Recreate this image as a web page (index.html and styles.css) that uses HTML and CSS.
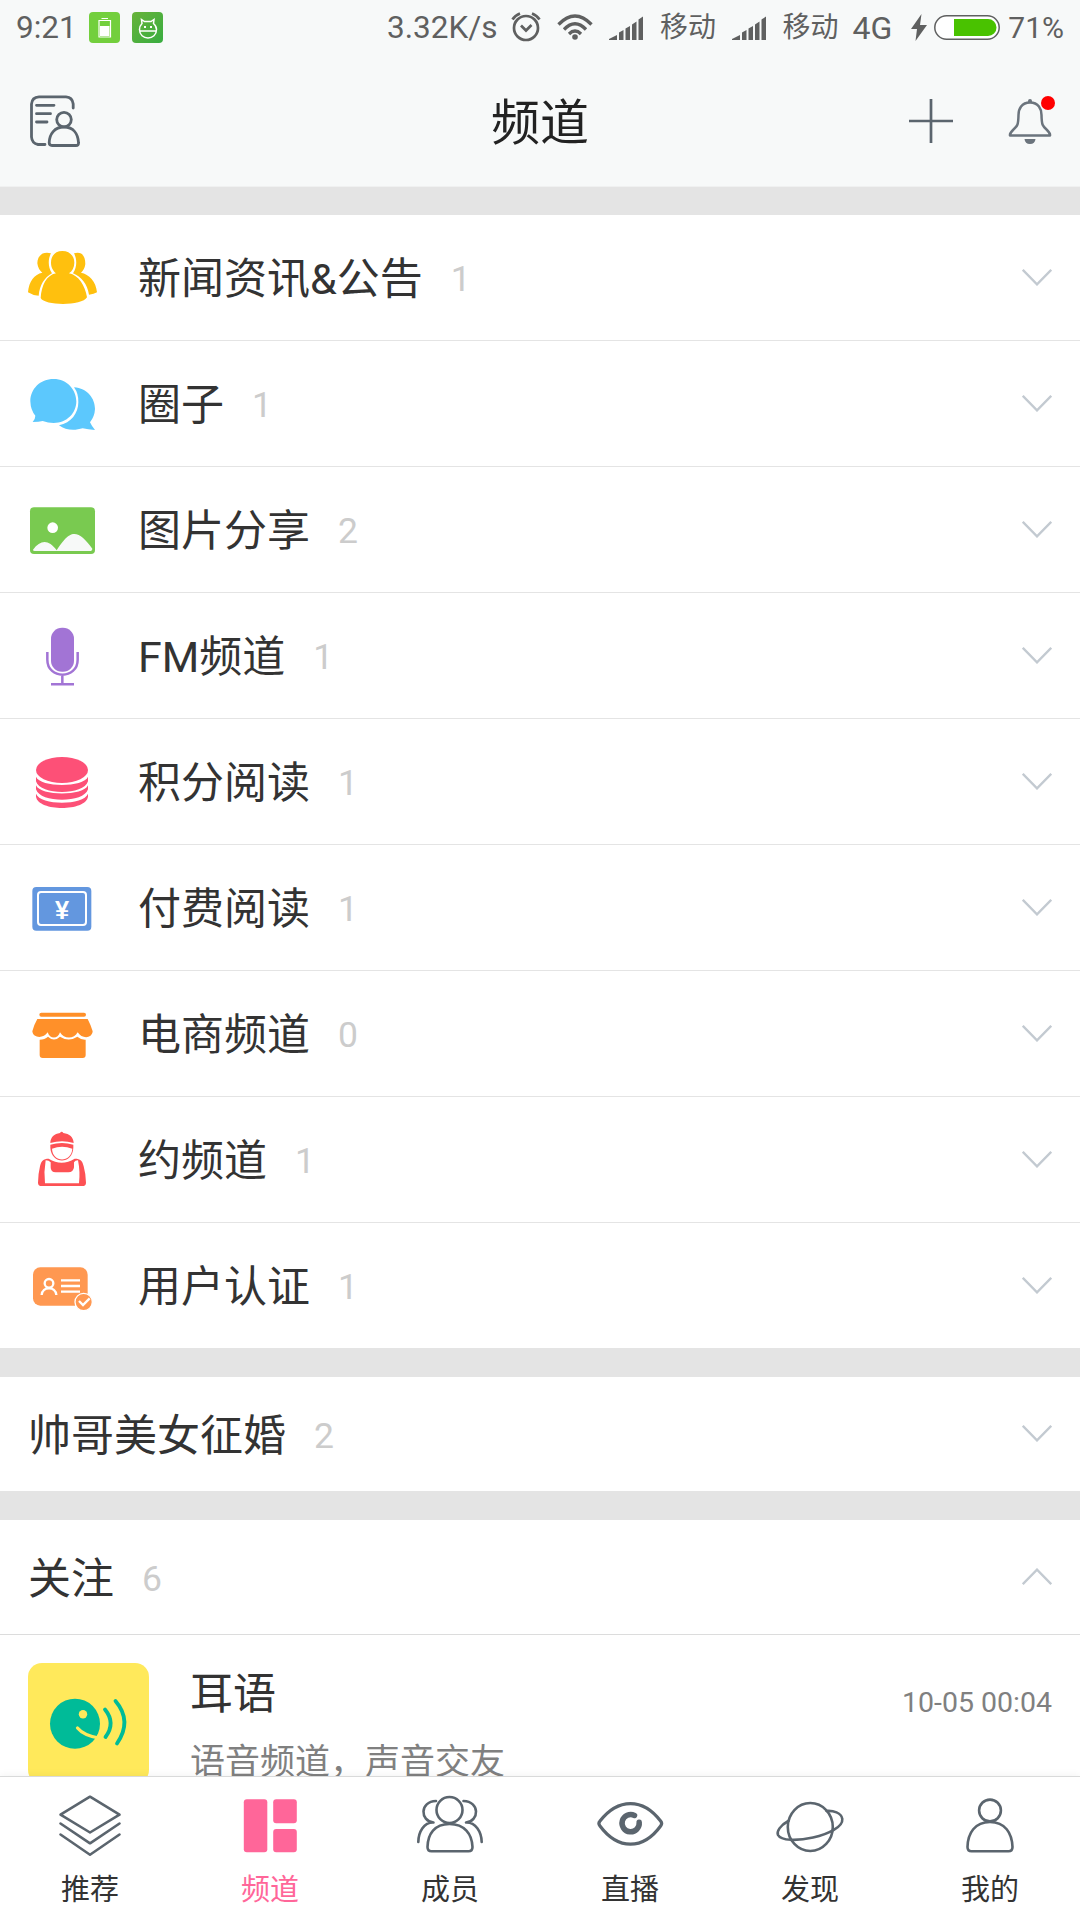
FILE: index.html
```html
<!DOCTYPE html>
<html lang="zh-CN">
<head>
<meta charset="utf-8">
<title>频道</title>
<link rel="stylesheet" href="styles.css">
</head>
<body>
<svg class="defs" aria-hidden="true">
  <symbol id="chevron" viewBox="0 0 30 17"><path d="M.8 .8 15 15.4 29.2 .8" fill="none" stroke="#c3cad1" stroke-width="2.300"/></symbol>
  <symbol id="signal" viewBox="0 0 34 24"><path d="M0 24V23L8 19V24ZM10 24V16.500L14.500 14V24ZM16.500 24V12.500L21 10V24ZM23 24V8.500L27.500 5.500V24ZM29.500 24V3.500L34 .500V24Z" fill="#5f6060"/></symbol>
</svg>
<div class="screen">
  <div class="status">
    <span class="clock">9:21</span>
    <svg class="app-badge" viewBox="0 0 31 31"><rect width="31" height="31" rx="4" fill="#73cf3d"/><path d="M12.500 6.500H19M10 8.500H21.500V25H10Z" fill="none" stroke="#fff" stroke-width="1.200"/><path d="M11 14H20.500V24H11Z" fill="#fff"/></svg>
    <svg class="app-badge second" viewBox="0 0 31 31"><defs><linearGradient id="g" x1="0" y1="0" x2="1" y2="1"><stop offset="0" stop-color="#68b33a"/><stop offset="1" stop-color="#38ad41"/></linearGradient></defs><rect width="31" height="31" rx="4" fill="url(#g)"/><path d="M10 11.500 9.500 7.500 12.500 9.500H19L22 7.500 21.500 11.500Q24.500 14 24.500 17.500C24.500 23 20.500 26 16 26S7.500 23 7.500 17.500Q7.500 14 10 11.500ZM7.500 19H24.500" fill="none" stroke="#fff" stroke-width="1.500"/><path d="M12 14h2v2h-2zM18 14h2v2h-2z" fill="#fff"/></svg>
    <span class="speed">3.32K/s</span>
    <svg class="alarm" viewBox="0 0 30 30"><g fill="none" stroke="#5f6060" stroke-width="2.700"><circle cx="15" cy="16" r="12"/><path d="M1.500 7.500Q4 3.500 9 1.500M28.500 7.500Q26 3.500 21 1.500M10 13.500 15 18.500 20.500 13" /></g></svg>
    <svg class="wifi" viewBox="0 0 36 26"><g fill="none" stroke="#5f6060" stroke-width="3.300"><path d="M1.500 10.500Q18-6.500 34.500 10.500M7 15.500Q18 4 29 15.500M12 20Q18 14 24 20"/></g><circle cx="18" cy="23" r="2.800" fill="#5f6060"/></svg>
    <svg class="signal"><use href="#signal"/></svg>
    <span class="carrier">移动</span>
    <svg class="signal"><use href="#signal"/></svg>
    <span class="carrier">移动</span>
    <span class="net">4G</span>
    <svg class="bolt" viewBox="0 0 16 27"><path d="M10.500 0 0 15H6L4.500 27 16 11H9Z" fill="#5f6060"/></svg>
    <svg class="battery" viewBox="0 0 66 25"><rect x=".8" y=".8" width="64.400" height="23.400" rx="11.700" fill="#fff" stroke="#5f6060" stroke-width="1.500"/><path d="M20 4H54A8.500 8.500 0 0 1 54 21H20Z" fill="#49c200"/></svg>
    <span class="percent">71%</span>
  </div>

  <header class="topbar">
    <svg class="contacts" viewBox="0 0 50 52"><g fill="none" stroke="#5b656e" stroke-width="2.800" stroke-linecap="round"><path d="M43.200 13V9Q42.500 2.200 36 1.800H9Q2 2.200 1.500 9V42Q2 48.500 8 49.500H15M6.500 10.300H24M6.500 18.700H20.500M6.500 27H17"/><circle cx="34" cy="24.600" r="7.300"/><path d="M34 32C24.500 32 19.500 39 19.200 47.500Q19.200 50.500 22 50.500H46Q48.800 50.500 48.500 47.500C48 39 43.500 32 34 32Z"/></g></svg>
    <h1 class="title">频道</h1>
    <svg class="plus" viewBox="0 0 44 44"><path d="M22 0V44M0 22H44" stroke="#5b656e" stroke-width="2.700"/></svg>
    <div class="bell-wrap">
      <svg class="bell" viewBox="0 0 44 46"><g fill="none" stroke="#6b747d" stroke-width="2.500" stroke-linejoin="round"><path d="M22 4.500C13.500 4.500 10.500 11 10.500 17C10.300 27 9.500 28 5 32Q1.500 35.500 2 37.500H42Q42.500 35.500 39 32C34.500 28 33.700 27 33.500 17C33.500 11 30.500 4.500 22 4.500Z"/></g><path d="M20 5V3Q20 1 22 1T24 3V5ZM16.500 41H27.500Q27 46 22 46T16.500 41Z" fill="#6b747d"/></svg>
      <i class="dot"></i>
    </div>
  </header>

  <main class="content">
    <section class="group">
      <div class="row"><svg class="icon" viewBox="72 75 228 225"><g fill="#ffc00e"><path d="M153 115C125 108 112 125 112 145Q114 163 127 173C103 178 87 198 84 232Q97 241 116 242C119 210 133 188 156 175C143 157 144 131 153 115ZM222 115C247 108 256 125 256 147Q254 163 243 173C267 178 288 198 291 232Q282 237 267 239C262 207 244 185 219 175C232 157 231 131 222 115Z"/><path d="M187 108C165 108 153 123 153 143C153 158 160 168 168 175C139 181 125 211 122 249C134 273 247 273 261 247C255 211 236 181 207 175C217 168 223 157 223 143C223 123 209 108 187 108Z"/></g></svg><span class="name">新闻资讯&amp;公告</span><span class="count">1</span><svg class="chev"><use href="#chevron"/></svg></div>
      <div class="row"><svg class="icon" viewBox="72 453 228 225"><g fill="#5cc8fd"><path d="M161 492C120 492 91 522 91 559Q92 586 106 602Q106 612 98 621Q117 621 128 618Q144 624 161 624C201 624 229 594 229 559S201 492 161 492Z"/><path d="M222 517C262 520 285 550 285 582Q284 604 270 622Q275 633 285 645Q264 644 248 640C225 647 197 647 177 631C214 624 235 594 235 562Q236 536 222 517Z"/></g></svg><span class="name">圈子</span><span class="count">1</span><svg class="chev"><use href="#chevron"/></svg></div>
      <div class="row"><svg class="icon" viewBox="72 831 228 225"><rect x="90" y="877" width="195" height="140" rx="12" fill="#79ca50"/><circle cx="158" cy="938" r="16" fill="#fff"/><path d="M99 1004C122 973 146 973 170 1006C198 963 211 957 223 957C240 957 258 975 277 1001Q277 1008 269 1008H104Q99 1008 99 1004Z" fill="#f7f9f8"/></svg><span class="name">图片分享</span><span class="count">2</span><svg class="chev"><use href="#chevron"/></svg></div>
      <div class="row"><svg class="icon" viewBox="72 69 228 225"><rect x="153" y="98" width="69" height="132" rx="33" fill="#a274d5"/><path d="M142 171V194C142 254 233 254 233 194V171M187 240V267M153 268H222" fill="none" stroke="#a274d5" stroke-width="7.500"/></svg><span class="name">FM频道</span><span class="count">1</span><svg class="chev"><use href="#chevron"/></svg></div>
      <div class="row"><svg class="icon" viewBox="72 447 228 225"><g fill="#fd5077"><ellipse cx="186" cy="525" rx="78" ry="39"/><path d="M108 545C121 578 251 578 264 545V559C252 602 120 602 108 559Z"/><path d="M108 571C121 604 251 604 264 571V583C252 625 120 625 108 583Z"/><path d="M108 596C121 632 251 632 264 596V605C257 650 115 650 108 605Z"/></g></svg><span class="name">积分阅读</span><span class="count">1</span><svg class="chev"><use href="#chevron"/></svg></div>
      <div class="row"><svg class="icon" viewBox="72 825 228 225"><rect x="97" y="876" width="177" height="131" rx="12" fill="#6397df"/><rect x="114" y="891" width="144" height="99" rx="9" fill="none" stroke="#fff" stroke-width="6"/><text class="yen" x="186" y="971">¥</text></svg><span class="name">付费阅读</span><span class="count">1</span><svg class="chev"><use href="#chevron"/></svg></div>
      <div class="row"><svg class="icon" viewBox="72 78 228 225"><g fill="#ff9029"><rect x="118" y="128" width="140" height="12" rx="6"/><path d="M112 147H263Q272 164 278 184C276 207 245 207 233 187C223 208 191 208 180 187C174 208 149 208 143 187C131 207 99 205 97 184Q102 164 112 147Z"/><path d="M119 209Q134 209 144 200Q162 217 180 200Q206 217 232 200Q244 210 257 209V255Q257 264 248 264H128Q119 264 119 255Z"/></g></svg><span class="name">电商频道</span><span class="count">0</span><svg class="chev"><use href="#chevron"/></svg></div>
      <div class="row"><svg class="icon" viewBox="72 456 228 225"><g fill="#fd5154"><path d="M151 519C151 502 163 491 180 489Q185 482 190 489C208 491 221 502 221 519Q186 509 151 519Z"/><path d="M151 524Q186 514 220 524V533C218 584 154 584 151 533ZM156 536C158 579 214 579 217 536Q186 525 156 536Z" fill-rule="evenodd"/><path d="M146 566Q185 590 224 566C242 566 247 572 251 589Q257 610 258 638Q258 648 247 648H125Q114 648 114 638Q114 614 120 589C124 572 130 566 146 566ZM137 571Q131 605 135 640H237Q241 605 234 571Q225 571 222 577V592Q220 607 205 607H167Q152 607 152 592V577Q147 571 137 571Z" fill-rule="evenodd"/></g></svg><span class="name">约频道</span><span class="count">1</span><svg class="chev"><use href="#chevron"/></svg></div>
      <div class="row"><svg class="icon" viewBox="72 834 228 225"><rect x="99" y="892" width="164" height="115" rx="22" fill="#ff9851"/><g fill="none" stroke="#fff" stroke-width="7"><circle cx="147" cy="940" r="13"/><path d="M125 975C127 948 167 948 169 975M183 931H240M183 948H240M183 965H240"/></g><circle cx="251" cy="996" r="26" fill="#ff9851" stroke="#fff" stroke-width="4"/><path d="M237 993 249 1005 269 985" fill="none" stroke="#fff" stroke-width="7"/></svg><span class="name">用户认证</span><span class="count">1</span><svg class="chev"><use href="#chevron"/></svg></div>
    </section>

    <section class="group">
      <div class="row compact"><span class="name">帅哥美女征婚</span><span class="count">2</span><svg class="chev"><use href="#chevron"/></svg></div>
    </section>

    <section class="group">
      <div class="row compact"><span class="name">关注</span><span class="count">6</span><svg class="chev up"><use href="#chevron"/></svg></div>
      <article class="feed">
        <svg class="avatar" viewBox="0 0 121 121"><rect width="121" height="121" rx="14" fill="#ffe95b"/><circle cx="47" cy="60.700" r="25" fill="#00bb98"/><circle cx="55" cy="51.300" r="4.200" fill="#ffe95b"/><path d="M49.500 65Q56 73 73 75.500" fill="none" stroke="#ffe95b" stroke-width="3.200" stroke-linecap="round"/><path d="M77 46.500Q88 60 77.500 74M87.500 38Q104.500 58 89 80.500" fill="none" stroke="#00bb98" stroke-width="3.800" stroke-linecap="round"/></svg>
        <div class="feed-text">
          <div class="feed-title">耳语</div>
          <div class="feed-sub">语音频道，声音交友</div>
        </div>
        <time class="feed-time">10-05 00:04</time>
      </article>
    </section>
  </main>

  <nav class="tabs">
    <a class="tab"><svg viewBox="0 0 72 66"><path d="M36 2.700 65.500 20.700 36 38.500 6.500 20.700ZM6.500 29.500 36 49.300 65.500 29.500M6.500 40.500 36 60.800 65.500 40.500" /></svg><span>推荐</span></a>
    <a class="tab active"><svg viewBox="0 0 72 66"><rect x="9.800" y="5.300" width="23.500" height="53" rx="3"/><rect x="39.200" y="5.300" width="23.600" height="24" rx="3"/><rect x="39.200" y="35" width="23.600" height="23.300" rx="3"/></svg><span>频道</span></a>
    <a class="tab"><svg viewBox="0 0 72 66"><circle cx="35.500" cy="16" r="13"/><path d="M35.500 30C20.500 30 13.800 40 13.500 53Q13.500 57.300 17.500 57.300H54.500Q58.500 57.300 58.500 53C58 40 50.500 30 35.500 30ZM22 7C5.500 7.500 6 27 19.500 28.500C10 28 4.500 38 4.300 48M49.500 7C66 7.500 65.500 27 52 28.500C61.500 28 67.500 38 67.700 48"/></svg><span>成员</span></a>
    <a class="tab"><svg viewBox="0 0 72 66"><path class="bold" d="M5.800 27.300C24 3.700 49 3.700 66.800 27.300Q68.500 29.500 66.800 31.700C49 56.300 24 56.300 5.800 31.700Q4 29.500 5.800 27.300Z"/><path class="iris" d="M40.500 21.500A8.600 8.600 0 1 0 45.200 28.300"/></svg><span>直播</span></a>
    <a class="tab"><svg viewBox="0 0 72 66"><ellipse cx="36.300" cy="33" rx="22.500" ry="24"/><path d="M14.300 27C6 31.500 2.500 37.500 4 41C10 53 70 41 68.300 25C67.500 18.500 59 16.500 52.500 17"/></svg><span>发现</span></a>
    <a class="tab"><svg viewBox="0 0 72 66"><circle cx="36" cy="16.500" r="10.900"/><path d="M36 28C21 28 13.800 39 13.500 53Q13.500 57.300 17.500 57.300H54.500Q58.500 57.300 58.500 53C58 39 51 28 36 28Z"/></svg><span>我的</span></a>
  </nav>
</div>
</body>
</html>
```
FILE: styles.css
```css
* { box-sizing: border-box; }
body {
  margin: 0;
  background: #fff;
  font-family: Roboto, "Noto Sans CJK SC", sans-serif;
  color: #333;
}
svg { display: block; flex: none; }
.defs { width: 0; height: 0; position: absolute; }
.screen {
  width: 1080px;
  height: 1920px;
  display: flex;
  flex-direction: column;
  overflow: hidden;
}

/* status bar */
.status {
  height: 56px;
  flex: none;
  display: flex;
  align-items: center;
  padding: 0 16px 1px;
  background: #f7f9f9;
  color: #5f6060;
  font-size: 31.5px;
  line-height: 40px;
  white-space: nowrap;
}
.clock { width: 73px; }
.app-badge { width: 31px; height: 31px; }
.app-badge.second { margin-left: 12px; }
.speed { margin-left: auto; }
.alarm { width: 30px; height: 30px; margin-left: 14px; margin-top: -2px; }
.wifi { width: 36px; height: 26px; margin-left: 16px; margin-top: -1px; }
.signal { width: 34px; height: 24px; margin-left: 16px; }
.carrier { font-size: 28px; margin-left: 16.5px; padding-top: 1px; }
.net { font-size: 32px; margin-left: 14px; }
.bolt { width: 16px; height: 27px; margin-left: 19px; }
.battery { width: 66px; height: 25px; margin-left: 7px; }
.percent { font-size: 30px; margin-left: 8px; }

/* title bar */
.topbar {
  height: 131px;
  flex: none;
  display: flex;
  align-items: center;
  padding: 0 28px 0 30px;
  background: #f7f9f9;
  border-bottom: 1px solid #f0f1f1;
}
.contacts { width: 50px; height: 52px; }
.title {
  margin: 0 0 0 411px;
  padding-top: 6px;
  font-size: 49px;
  line-height: 60px;
  font-weight: 400;
  color: #222;
}
.plus { width: 44px; height: 44px; margin-left: auto; }
.bell-wrap { position: relative; margin-left: 55px; }
.bell { width: 44px; height: 46px; }
.dot {
  position: absolute;
  right: -3px;
  top: -2px;
  width: 14px;
  height: 14px;
  border-radius: 50%;
  background: #f00;
}

/* channel lists */
.content {
  flex: 1;
  min-height: 0;
  overflow: hidden;
  display: flex;
  flex-direction: column;
  gap: 29px;
  padding-top: 28px;
  background: #e4e4e4;
}
.group { background: #fff; flex: none; }
.row {
  height: 126px;
  display: flex;
  align-items: center;
  padding: 0 28px 0 24px;
  border-bottom: 1px solid #e4e4e4;
}
.row:last-child { height: 125px; border-bottom: 0; }
.row.compact { height: 115px; padding-left: 28px; border-color: #dcdcdc; }
.row.compact:last-child { height: 114px; }
.icon { width: 76px; height: 75px; margin-right: 38px; }
.name { font-size: 43px; line-height: 60px; padding-top: 2px; }
.compact .name { padding-top: 4px; }
.count { font-size: 35.5px; line-height: 60px; padding-top: 3px; margin-left: 28px; color: #ccc; }
.chev { width: 30px; height: 17px; margin-left: auto; }
.compact .chev { margin-top: -2px; }
.chev.up { transform: scaleY(-1); }
.yen { font: 700 76px "Liberation Sans", sans-serif; fill: #fff; text-anchor: middle; }

.feed { display: flex; height: 177px; padding: 28px 28px 0; }
.avatar { width: 121px; height: 121px; }
.feed-text { margin-left: 41px; flex: 1; }
.feed-title { font-size: 43px; line-height: 60px; padding-top: 1px; }
.feed-sub { font-size: 35px; line-height: 50px; margin-top: 14px; color: #808080; }
.feed-time { font-size: 28.5px; line-height: 40px; padding-top: 20px; color: #808080; }

/* bottom navigation */
.tabs {
  position: relative;
  flex: none;
  height: 144px;
  display: grid;
  grid-template-columns: repeat(6, 1fr);
  background: #fff;
  border-top: 1px solid #d9dada;
  box-shadow: 0 -1px 8px rgba(0, 0, 0, .05);
}
.tab {
  display: flex;
  flex-direction: column;
  align-items: center;
  padding-top: 17px;
  font-size: 29px;
  line-height: 40px;
}
.tab svg {
  width: 72px;
  height: 66px;
  margin-bottom: 10px;
  fill: none;
  stroke: #5b656e;
  stroke-width: 2.6;
  stroke-linecap: round;
  stroke-linejoin: round;
}
.tab .bold { stroke-width: 3.2; }
.tab .iris { stroke-width: 5.5; }
.tab.active { color: #f69; }
.tab.active svg { fill: #f69; stroke: none; }
```
